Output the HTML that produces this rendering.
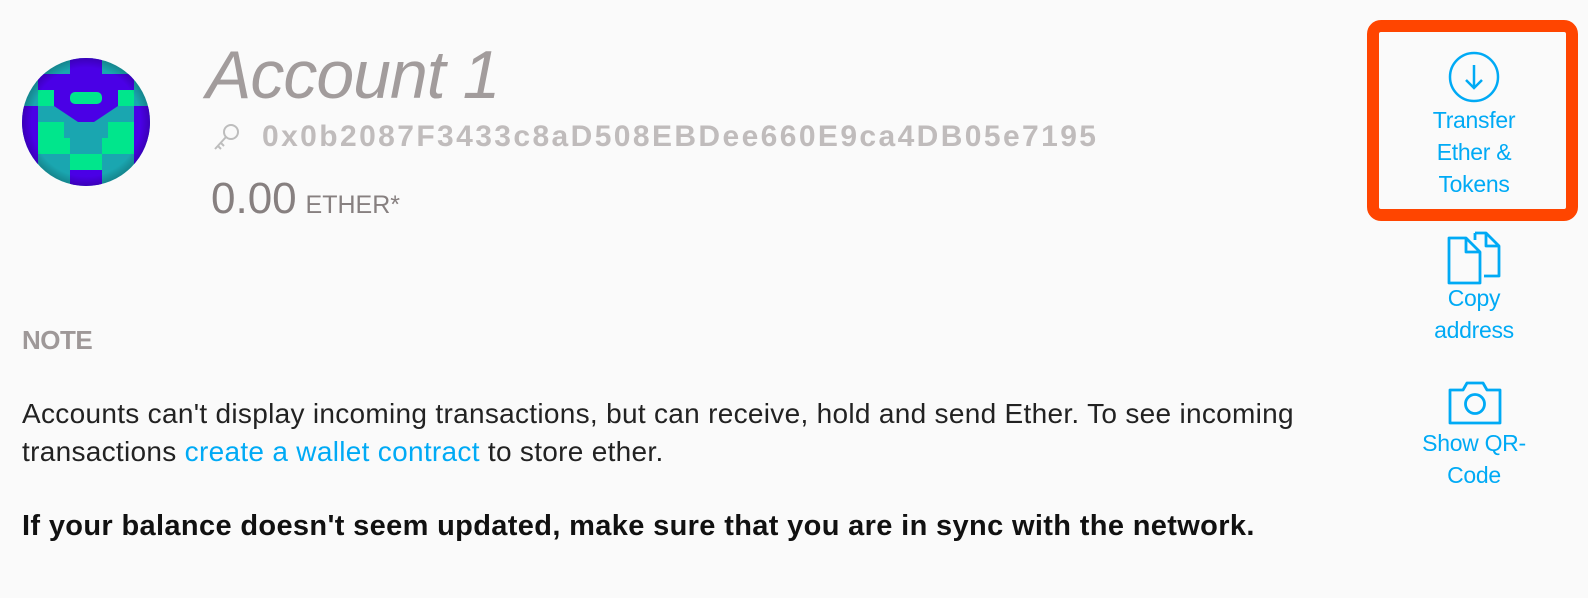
<!DOCTYPE html>
<html><head><meta charset="utf-8"><style>
body{margin:0;width:1588px;height:598px;background:#fafafa;font-family:"Liberation Sans",sans-serif;position:relative;overflow:hidden}
.a{position:absolute;white-space:nowrap}
.blue{color:#00aaf5}
.side{position:absolute;left:1384px;width:180px;text-align:center;color:#00aaf5;font-size:23px;line-height:32px;letter-spacing:-0.3px}
</style></head><body>
<svg class="a" style="left:22px;top:58px" width="128" height="128" viewBox="0 0 128 128">
<defs><clipPath id="c"><circle cx="64" cy="64" r="64"/></clipPath><radialGradient id="g" cx="50%" cy="50%" r="50%"><stop offset="85%" stop-color="#000" stop-opacity="0"/><stop offset="100%" stop-color="#000" stop-opacity="0.2"/></radialGradient></defs>
<g clip-path="url(#c)">
<rect width="128" height="128" fill="#1aa6b0"/>
<g fill="#4a00e6">
<rect x="48" y="0" width="32" height="16"/><rect x="16" y="0" width="10" height="8"/><rect x="102" y="0" width="10" height="8"/>
<rect x="16" y="16" width="96" height="16"/>
<rect x="32" y="32" width="16" height="16"/><rect x="80" y="32" width="16" height="16"/><rect x="48" y="32" width="32" height="16"/>
<rect x="0" y="48" width="16" height="16"/><rect x="112" y="48" width="16" height="16"/>
<polygon points="32,48 96,48 72,64 56,64"/>
<rect x="0" y="64" width="16" height="48"/><rect x="112" y="64" width="16" height="48"/>
<rect x="48" y="112" width="32" height="16"/>
</g>
<g fill="#00e68c">
<rect x="16" y="32" width="16" height="16"/><rect x="96" y="32" width="16" height="16"/>
<rect x="48" y="34" width="32" height="12" rx="5"/>
<rect x="16" y="64" width="16" height="16"/><rect x="96" y="64" width="16" height="16"/>
<rect x="16" y="80" width="32" height="16"/><rect x="80" y="80" width="32" height="16"/>
<rect x="48" y="96" width="32" height="16"/>
<rect x="32" y="64" width="10" height="16"/><rect x="86" y="64" width="10" height="16"/>
</g>
<circle cx="64" cy="64" r="64" fill="url(#g)"/>
</g></svg>
<div class="a" style="left:206px;top:36px;font-size:68px;font-style:italic;color:#a29c9c;letter-spacing:-1px">Account 1</div>
<svg class="a" style="left:212px;top:122px" width="30" height="32" viewBox="0 0 30 32" fill="none" stroke="#bdbdbd" stroke-width="2"><circle cx="19" cy="10" r="7"/><path d="M14 15 L3 27 M6 24 L9 27 M9 21 L12 24"/></svg>
<div class="a" style="left:262px;top:120px;font-size:30px;font-weight:bold;color:#c0bcbc;letter-spacing:2.4px">0x0b2087F3433c8aD508EBDee660E9ca4DB05e7195</div>
<div class="a" style="left:211px;top:174px;color:#878080"><span style="font-size:44px">0.00</span>&nbsp;&nbsp;<span style="font-size:25px">ETHER*</span></div>
<div class="a" style="left:22px;top:325px;font-size:26px;font-weight:bold;color:#9e9898;letter-spacing:-0.5px">NOTE</div>
<div class="a" style="left:22px;top:395px;font-size:28px;line-height:38px;color:#222;letter-spacing:0.3px">Accounts can't display incoming transactions, but can receive, hold and send Ether. To see incoming<br>transactions <span class="blue">create a wallet contract</span> to store ether.</div>
<div class="a" style="left:22px;top:510px;font-size:29px;font-weight:bold;color:#111;letter-spacing:0.35px">If your balance doesn't seem updated, make sure that you are in sync with the network.</div>
<div class="a" style="left:1367px;top:20px;width:187px;height:177px;border:12px solid #ff4500;border-radius:14px"></div>
<svg class="a" style="left:1448px;top:51px" width="52" height="52" viewBox="0 0 52 52" fill="none" stroke="#00aaf5" stroke-width="2.5"><circle cx="26" cy="26" r="24"/><path d="M26 14 V37 M18 29 L26 37 L34 29"/></svg>
<div class="side" style="top:104px">Transfer<br>Ether &amp;<br>Tokens</div>
<svg class="a" style="left:1446px;top:230px" width="56" height="56" viewBox="0 0 56 56" fill="none" stroke="#00aaf5" stroke-width="2.8" stroke-linejoin="round"><path d="M3 8 H20 L34 22 V53 H3 Z"/><path d="M20 8 V22 H34"/><path d="M29 3 H40 L53 16 V46 H38"/><path d="M40 3 V16 H53"/><path d="M29 3 V10"/></svg>
<div class="side" style="top:282px">Copy<br>address</div>
<svg class="a" style="left:1447px;top:380px" width="56" height="46" viewBox="0 0 56 46" fill="none" stroke="#00aaf5" stroke-width="2.8" stroke-linejoin="round"><path d="M3 10 H16 L20 3 H36 L40 10 H53 V43 H3 Z"/><circle cx="28" cy="24" r="9.5"/></svg>
<div class="side" style="top:427px">Show QR-<br>Code</div>
</body></html>
